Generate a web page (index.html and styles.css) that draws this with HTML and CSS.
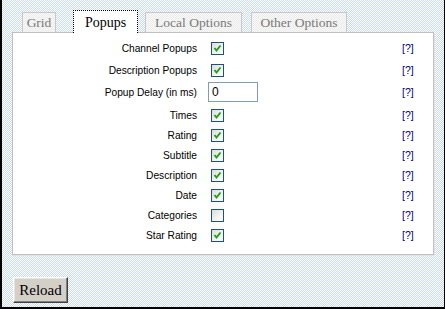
FILE: index.html
```html
<!DOCTYPE html>
<html>
<head>
<meta charset="utf-8">
<link rel="stylesheet" href="styles.css">
</head>
<body>
<div class="window">
  <div class="tabs">
    <div class="tab tab-grid">Grid</div>
    <div class="tab active">Popups</div>
    <div class="tab tab-local">Local Options</div>
    <div class="tab tab-other">Other Options</div>
  </div>
  <div class="panel">
    <div class="row sp"><span class="label">Channel Popups</span><span class="ctrl"><span class="cb on"><svg viewBox="0 0 11 11" width="11" height="11"><polyline points="2.5,5 4.5,7.5 8.5,2.5" /></svg></span></span><span class="help">[?]</span></div>
    <div class="row sp1"><span class="label">Description Popups</span><span class="ctrl"><span class="cb on"><svg viewBox="0 0 11 11" width="11" height="11"><polyline points="2.5,5 4.5,7.5 8.5,2.5" /></svg></span></span><span class="help">[?]</span></div>
    <div class="row tall sp"><span class="label">Popup Delay (in ms)</span><span class="ctrl"><span class="input">0</span></span><span class="help">[?]</span></div>
    <div class="row"><span class="label">Times</span><span class="ctrl"><span class="cb on"><svg viewBox="0 0 11 11" width="11" height="11"><polyline points="2.5,5 4.5,7.5 8.5,2.5" /></svg></span></span><span class="help">[?]</span></div>
    <div class="row"><span class="label">Rating</span><span class="ctrl"><span class="cb on"><svg viewBox="0 0 11 11" width="11" height="11"><polyline points="2.5,5 4.5,7.5 8.5,2.5" /></svg></span></span><span class="help">[?]</span></div>
    <div class="row"><span class="label">Subtitle</span><span class="ctrl"><span class="cb on"><svg viewBox="0 0 11 11" width="11" height="11"><polyline points="2.5,5 4.5,7.5 8.5,2.5" /></svg></span></span><span class="help">[?]</span></div>
    <div class="row"><span class="label">Description</span><span class="ctrl"><span class="cb on"><svg viewBox="0 0 11 11" width="11" height="11"><polyline points="2.5,5 4.5,7.5 8.5,2.5" /></svg></span></span><span class="help">[?]</span></div>
    <div class="row"><span class="label">Date</span><span class="ctrl"><span class="cb on"><svg viewBox="0 0 11 11" width="11" height="11"><polyline points="2.5,5 4.5,7.5 8.5,2.5" /></svg></span></span><span class="help">[?]</span></div>
    <div class="row"><span class="label">Categories</span><span class="ctrl"><span class="cb"></span></span><span class="help">[?]</span></div>
    <div class="row"><span class="label">Star Rating</span><span class="ctrl"><span class="cb on"><svg viewBox="0 0 11 11" width="11" height="11"><polyline points="2.5,5 4.5,7.5 8.5,2.5" /></svg></span></span><span class="help">[?]</span></div>
  </div>
  <div class="actions">
    <button class="btn">Reload</button>
  </div>
</div>
</body>
</html>
```
FILE: styles.css
```css
html, body {
  margin: 0;
  padding: 0;
}
body {
  width: 445px;
  height: 309px;
  overflow: hidden;
}
.window {
  box-sizing: border-box;
  width: 445px;
  height: 309px;
  border-left: 2px solid #000;
  border-right: 1px solid #000;
  border-bottom: 2px solid #000;
  background: repeating-conic-gradient(#cadcf4 0 25%, #ffffff 0 50%) 0 0 / 2px 2px;
  padding-top: 12px;
}
.tabs {
  display: flex;
  align-items: flex-end;
  padding-left: 20px;
  height: 20px;
  position: relative;
  z-index: 2;
}
.tab {
  box-sizing: border-box;
  height: 20px;
  padding-top: 2px;
  border: 1px solid #c8c8c8;
  border-bottom: none;
  background: repeating-conic-gradient(#ebebeb 0 25%, #f9f9f9 0 50%) 0 0 / 2px 2px;
  font-family: "Liberation Serif", serif;
  font-size: 13.5px;
  line-height: 16px;
  color: #7a7a7a;
  text-align: center;
  white-space: nowrap;
}
.tab-grid {
  width: 34px;
  margin-right: 17px;
}
.tab-local {
  width: 97px;
  margin-right: 9px;
}
.tab-other {
  width: 96px;
}
.tab.active {
  width: 65px;
  height: 23px;
  margin-bottom: -1px;
  margin-right: 7px;
  padding-top: 3px;
  background: #fff;
  border: 1px dotted #000;
  border-bottom: none;
  color: #000;
  font-size: 14px;
  line-height: 17px;
}
.panel {
  box-sizing: border-box;
  margin-left: 10px;
  width: 422px;
  background: #fff;
  border: 1px solid #c0c0c0;
  box-shadow: 1px 1px 0 #e2e2e2;
  padding: 5px 0 9px;
  position: relative;
  z-index: 1;
}
.row {
  display: flex;
  align-items: center;
  height: 20px;
  font-family: "Liberation Sans", Arial, sans-serif;
  font-size: 10.2px;
  color: #000;
}
.row.tall {
  height: 22px;
}
.row.sp {
  margin-bottom: 2px;
}
.row.sp1 {
  margin-bottom: 1px;
}
.label {
  width: 184px;
  text-align: right;
  white-space: nowrap;
}
.ctrl {
  margin-left: 11px;
  width: 194px;
  display: flex;
  align-items: center;
}
.cb {
  box-sizing: border-box;
  width: 13px;
  height: 13px;
  margin-left: 3px;
  border: 1px solid #1c5180;
  background: linear-gradient(135deg, #dcdcd7 0%, #f4f4f0 60%, #ffffff 100%);
  display: flex;
}
.cb svg polyline {
  fill: none;
  stroke: #21a121;
  stroke-width: 2;
}
.input {
  box-sizing: border-box;
  width: 50px;
  height: 20px;
  border: 1px solid #7f9db9;
  background: #fff;
  padding: 2px 3px;
  font-size: 12px;
  line-height: 15px;
}
.help {
  color: #000080;
  font-size: 10.5px;
}
.actions {
  padding: 22px 0 0 11px;
}
.btn {
  box-sizing: border-box;
  width: 55px;
  height: 26px;
  margin: 0;
  padding: 0;
  background: #d4d0c8;
  border: 1px solid;
  border-color: #ffffff #404040 #404040 #ffffff;
  box-shadow: inset -1px -1px 0 #808080, inset 1px 1px 0 #e8e6e1;
  font-family: "Liberation Serif", serif;
  font-size: 15px;
  color: #000;
  border-radius: 0;
}
```
